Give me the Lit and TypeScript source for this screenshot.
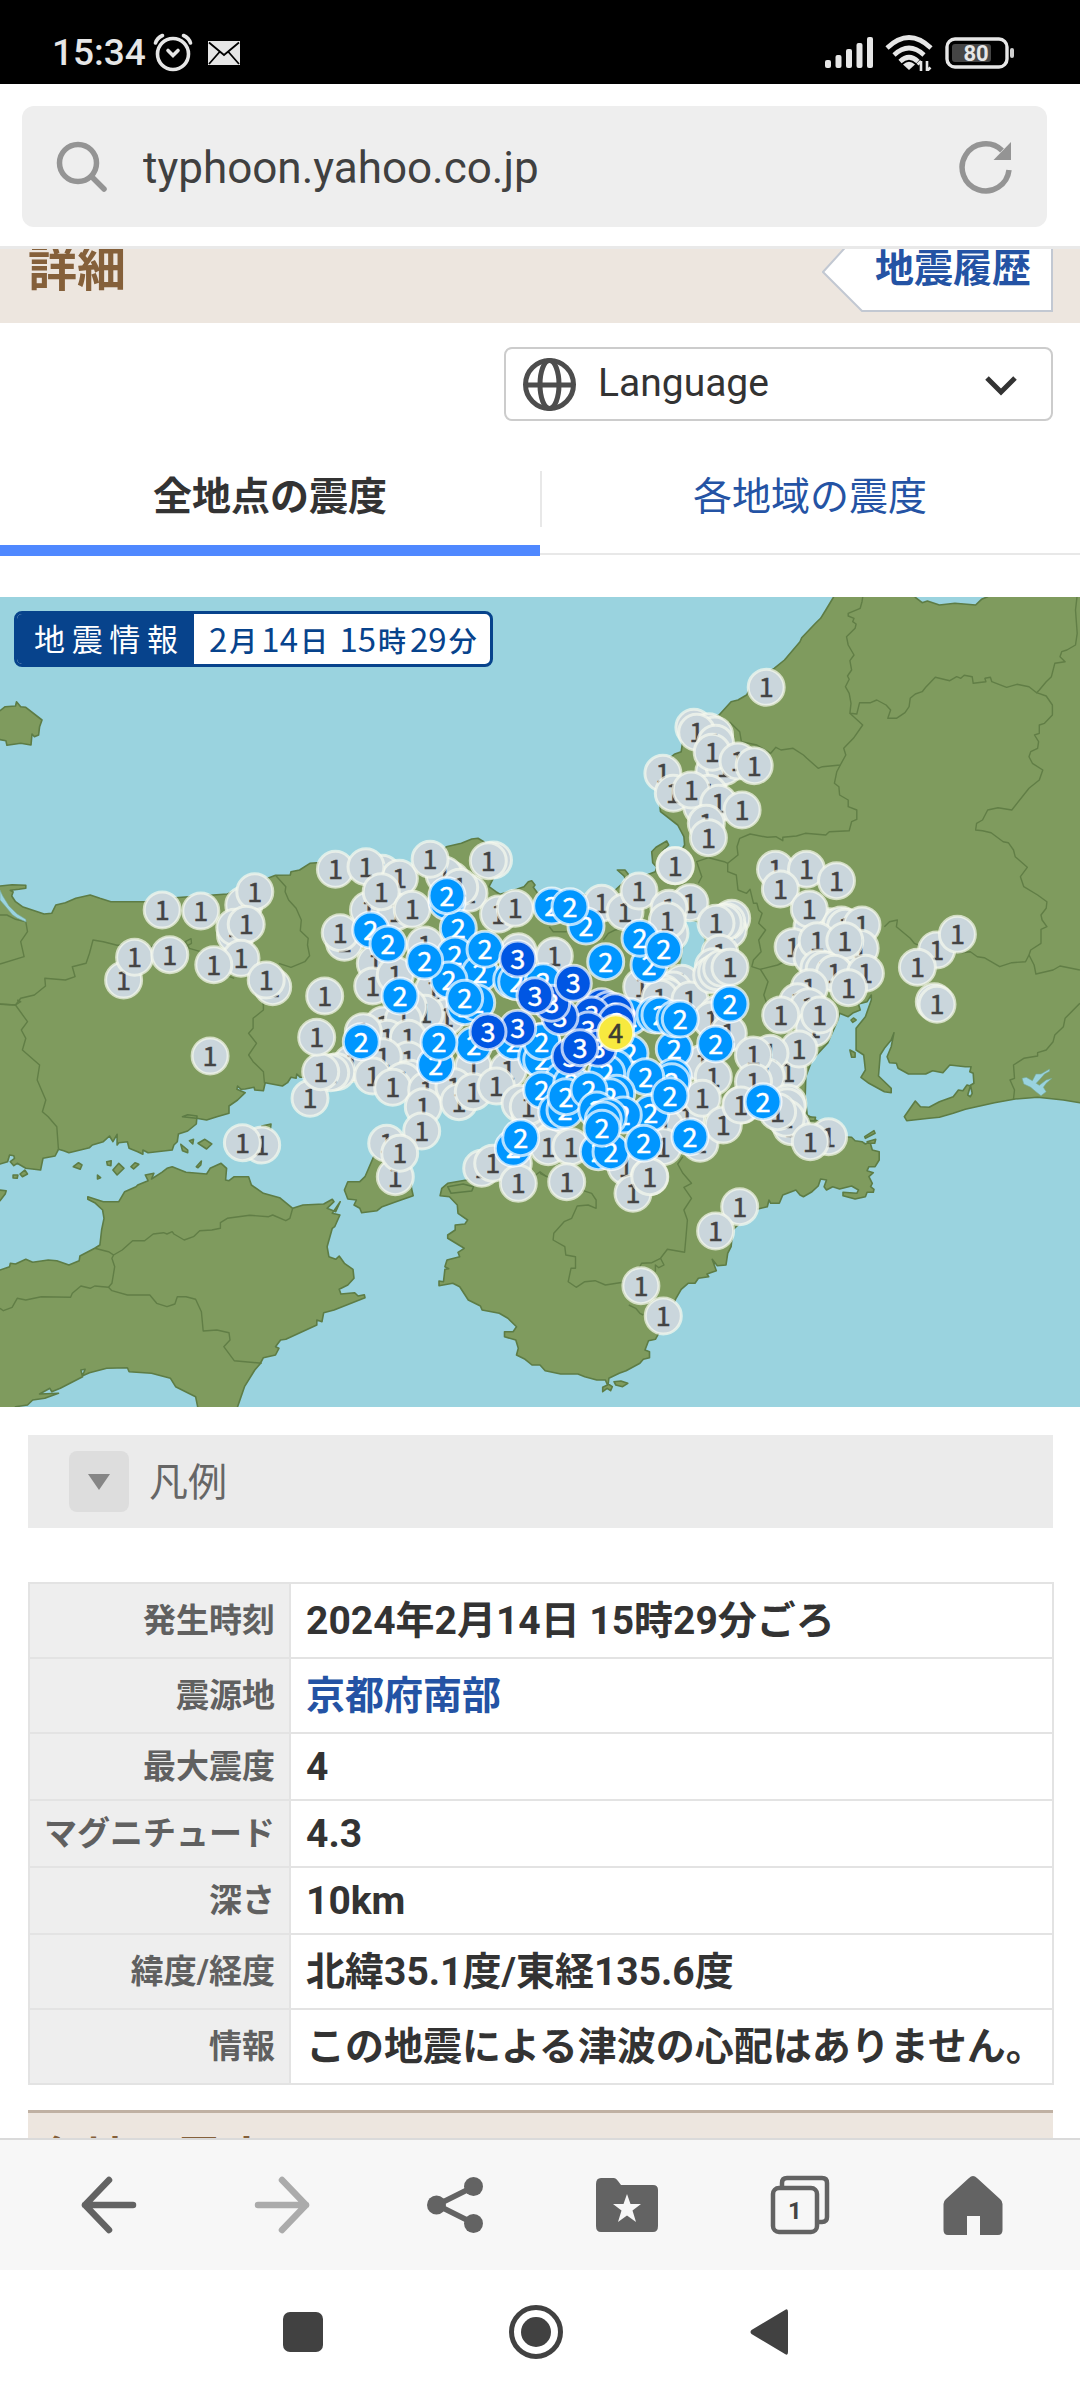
import { LitElement, html, svg, css } from "lit";
import { customElement, property } from "lit/decorators.js";

/* ---------- map geometry ---------- */

type Sheet = { x: number; y: number; sx: number; sy: number };
const NW: Sheet = { x: 0, y: -7, sx: 2.904, sy: 3 };
const NE: Sheet = { x: 540, y: -7, sx: 2.904, sy: 3 };
const SW: Sheet = { x: 0, y: 403, sx: 2.904, sy: 3 };
const SE: Sheet = { x: 540, y: 403, sx: 2.904, sy: 3 };
const KW: Sheet = { x: 300, y: 233, sx: 3, sy: 3 };
const KE: Sheet = { x: 500, y: 233, sx: 3, sy: 3 };

type Point = [number, number];

const pts = (s: Sheet, data: string): Point[] =>
  data
    .trim()
    .split(/\s+/)
    .map((p) => {
      const [x, y] = p.split(",").map(Number);
      return [Math.round((s.x + x / s.sx) * 10) / 10, Math.round((s.y + y / s.sy) * 10) / 10];
    });

const line = (points: Point[]) => "M" + points.map((p) => p.join(" ")).join("L");

const honshu = line([
  ...pts(NW, `-20,888 0,888 35,884 75,886 75,895 55,898 30,901 38,906 34,918 45,935 65,950 100,962 128,972 150,970 162,945 190,938 220,925 262,915 290,925 322,935 420,935 490,925 548,920 660,912 740,880 800,856 843,855 845,845 870,840 900,820 920,818 1000,815 1100,812 1200,830 1260,820 1296,770 1340,760 1370,747 1388,745 1405,755 1440,800 1440,850 1420,890 1440,905`),
  ...pts(KW, `600,193 650,178 672,170 685,155 695,152 705,165 700,172 712,188`),
  ...pts(KE, `150,205 250,195 330,195 378,150 372,138 352,120 375,120 385,133 382,145 400,150 466,125 470,112 458,98 455,65 468,52 500,33 506,45 490,60 480,80 500,92 540,85`),
  ...pts(NE, `400,800 420,765 418,740 400,705 350,665 345,620 335,560 370,510 390,493 410,485 415,450 470,400 520,375 555,335 575,330 600,315 620,275 680,235 710,210 755,155 760,143 800,100 815,85 830,60 852,22 856,-10 1080,-10 1090,22 1110,38 1125,33 1160,45 1205,40 1265,45 1282,28 1300,20 1310,-10 1610,-10`),
  ...pts(SE, `1610,315 1568,308 1520,300 1445,292 1380,297 1320,308 1235,328 1200,340 1160,352 1130,355 1065,362 1058,350 1075,325 1090,303 1105,320 1130,322 1160,305 1200,290 1215,270 1228,272 1240,255 1250,258 1242,285 1250,290 1255,280 1250,256 1260,250 1258,220 1248,215 1252,200 1235,200 1190,195 1170,218 1140,212 1120,222 1070,222 1040,205 1035,190 1015,188 1008,170 1020,140 1028,98 1020,120 1000,145 988,165 983,228 1020,265 1020,278 1000,275 955,250 932,232 945,210 940,165 918,150 918,85 945,50 962,0 962,-15 950,5 925,12 930,30 910,38 895,50 870,40 865,60 835,130 790,180 772,230 770,290 776,345 800,360 840,380 880,410 905,412 915,422 935,425 945,432 958,425 965,450 985,455 985,480 973,500 955,500 950,512 968,518 955,530 965,550 960,560 970,568 968,577 950,577 945,590 915,597 880,587 880,577 920,580 925,570 905,558 870,567 850,560 832,570 825,560 832,540 815,537 808,558 790,575 765,590 755,585 743,570 705,585 695,610 670,610 665,600 660,620 630,628 600,650 560,690 555,740 545,760 540,795 515,797 500,778 512,812 485,822 490,830 460,835 450,850 430,850 410,868 395,895 380,930 350,990 335,1018 315,1022 305,1050 318,1055 318,1073 300,1078 290,1090 250,1112 230,1120 200,1135 198,1152 210,1160 205,1172 195,1165 182,1175 182,1162 196,1155 190,1140 165,1140 130,1130 110,1122 60,1122 15,1112 0,1095`),
  ...pts(SW, `1545,1095 1525,1078 1500,1065 1505,1045 1498,1020 1465,1010 1465,995 1490,995 1500,980 1475,955 1450,940 1400,930 1395,918 1360,900 1335,860 1315,850 1275,857 1275,843 1288,845 1292,808 1303,806 1292,800 1298,780 1335,770 1330,757 1348,745 1300,715 1300,705 1322,690 1322,675 1350,672 1358,660 1330,640 1328,615 1305,590 1278,587 1283,565 1300,550 1355,540 1390,530 1400,480 1460,430 1520,350 1480,300 1400,290 1330,310 1250,290 1150,270 1090,250 1000,240 930,230 872,232 862,222 860,235 845,232 835,248 820,258 770,248 765,272 740,270 738,262 712,267 700,268 690,258 688,268 712,278 690,300 665,318 665,340 630,350 600,360 570,355 530,350 545,344 572,348 570,372 545,393 518,402 515,425 505,435 500,450 430,458 415,450 415,463 400,455 375,445 370,425 345,428 340,435 340,403 328,425 318,408 300,425 268,435 260,443 200,458 185,452 170,448 160,468 125,475 118,510 75,505 50,490 40,497 30,485 42,475 40,467 28,465 22,485 0,492 -20,495`),
]) + "Z";

const shikoku = line(
  pts(SW, `-20,812 0,810 28,800 30,790 45,792 75,778 95,787 140,780 165,782 200,795 230,782 232,768 275,745 290,735 295,690 302,655 298,630 275,608 255,598 255,590 300,605 345,605 362,575 395,560 400,555 430,542 422,525 447,520 440,537 470,517 485,505 500,500 540,517 600,522 610,505 642,490 658,505 655,540 665,542 680,530 722,530 730,555 765,580 812,593 850,625 880,615 940,612 965,598 970,605 950,625 975,635 988,605 965,640 987,645 972,680 965,685 950,740 955,770 975,778 985,768 1000,790 1025,808 1028,835 1010,855 985,868 990,882 1030,878 1040,888 1058,884 1060,893 970,930 940,938 935,965 920,960 920,975 830,1018 815,1020 800,1040 810,1045 800,1065 765,1073 755,1092 740,1110 710,1160 690,1220 690,1250 580,1250 568,1190 510,1160 495,1135 440,1120 375,1115 370,1103 310,1105 260,1118 240,1127 247,1108 235,1110 240,1130 175,1165 150,1175 145,1165 115,1182 170,1180 130,1195 95,1200 80,1215 45,1220 40,1250 -20,1250`),
) + "Z";

const area = (s: Sheet, d: string) => line(pts(s, d)) + "Z";

const islands = [
  area(SW, `1085,470 1060,530 1045,545 1010,545 1000,570 1010,597 1035,600 1028,615 1045,625 1050,638 1095,632 1110,620 1150,605 1200,587 1195,565 1190,480 1150,440`),
  area(NW, `-20,365 0,362 15,350 45,348 48,335 60,350 75,352 122,390 115,410 112,435 100,440 93,432 90,465 60,460 20,466 17,452 -20,445`),
  area(SW, `213,500 228,488 238,495 233,508`),
  area(SW, `310,485 323,482 322,497 312,495`),
  area(SW, `328,510 345,490 360,505 340,525`),
  area(SW, `380,500 392,488 403,493 388,507`),
  area(SW, `283,525 292,533 283,537`),
  area(SW, `525,433 545,450 545,458 530,452`),
  area(SW, `550,422 562,418 560,432`),
  area(SW, `575,430 595,418 615,432 600,447`),
  area(SW, `570,500 585,483 583,495 575,503`),
  area(SW, `760,378 787,372 785,392`),
  area(SW, `58,522 72,510 80,522 65,530`),
  area(SW, `38,525 52,525 50,535 38,534`),
  area(SW, `-5,570 18,572 15,582 0,602 -5,602`),
  area(SW, `1300,560 1345,552 1375,560 1370,573 1310,580`),
  area(SE, `900,150 915,158 915,172 905,172`),
  area(SE, `943,410 970,392 973,400 945,415`),
  area(SE, `950,425 975,418 972,430 955,430`),
  area(SE, `215,1145 235,1143 255,1150 240,1160 220,1155`),
  area(SE, `775,350 800,352 798,362 785,362`),
  area(SE, `903,60 910,54 918,60 908,67`),
];

const lakes = [
  area(KE, `545,268 590,275 615,330 603,370 605,400 595,420 540,424 500,470 460,520 450,510 490,450 540,410 550,350 560,310`),
  area(SE, `1400,235 1412,232 1430,242 1440,222 1455,222 1480,207 1480,214 1465,222 1450,240 1441,250 1450,256 1470,240 1487,235 1470,250 1462,262 1470,275 1455,287 1440,275 1425,262 1405,252`),
  area(NW, `0,900 8,918 26,948 50,972 75,988 76,996 50,984 36,974 15,948 0,930`),
];

const borders = [
  line(pts(NE, `938,15 935,35 930,55 895,70 895,78 912,85 908,95 918,102 915,115 890,140 895,165 912,195 900,212 905,240 893,258 898,268 887,290 898,310 903,340 900,370 920,372 928,338 960,338 978,330 1005,345 1018,360 1010,385 1035,385 1060,368 1072,350 1075,325 1090,312 1110,305 1120,292 1148,262 1190,272 1210,260 1222,265 1232,256 1255,260 1258,280 1295,275 1292,265 1308,262 1312,275 1355,292 1385,283 1420,290 1442,308 1450,300 1470,275 1485,260 1495,220 1525,215 1510,200 1515,185 1530,180 1555,165 1560,130 1555,60 1560,15`)),
  line(pts(NE, `900,370 937,405 910,445 882,475 888,495 872,525 820,530 808,535 775,505 765,495 735,475 700,480 685,472 670,490 630,465 585,455 580,425 550,395`)),
  line(pts(NE, `872,525 862,545 855,580 868,590 870,615 895,630 895,650 920,660 920,688 905,695 898,722 840,725 830,735 770,730 745,738 705,742 705,752 685,740 660,742 610,732 580,745 572,770 575,795 545,820 535,815 490,803 455,815 470,860 460,880`)),
  line(pts(NE, `1442,308 1470,318 1488,345 1488,375 1465,400 1450,405 1450,430 1436,435 1448,455 1445,475 1425,485 1420,500 1430,520 1460,540 1450,570 1420,595 1370,660 1330,653 1300,660 1285,690 1268,700 1265,720 1285,722 1310,728 1345,755 1360,758 1375,780 1380,800 1415,832 1395,860 1405,890 1445,915 1472,935 1470,955 1455,975 1458,990 1472,1010 1455,1018 1455,1060 1425,1080 1420,1095 1435,1125 1440,1152 1490,1140 1510,1128 1568,1140`)),
  line(pts(NE, `545,820 545,845 570,855 575,900 600,910 610,898 620,940 630,940 635,960 645,970 635,1000 655,1020 635,1050 642,1085 620,1110 615,1130 640,1138 690,1125 720,1110`)),
  line(pts(NE, `1000,1010 1015,995 1038,990 1035,1010 1075,1045 1087,1060 1130,1080 1210,1090 1250,1085 1270,1100 1290,1103 1335,1130 1370,1118 1410,1115 1420,1095`)),
  line(pts(NE, `640,1138 662,1175 650,1215 660,1245`)),
  line(pts(SE, `1568,10 1525,55 1520,80 1495,105 1490,125 1470,150 1445,158 1445,168 1405,175 1375,195 1378,235 1365,240 1378,270 1375,297`)),
  line(pts(SE, `415,470 400,492 415,520 440,550 418,562 440,595 418,630 428,660 425,700 420,757 370,748 350,775 325,788 295,790 285,810 250,845 190,855 160,842 130,845 105,862 82,845 90,805 103,805 103,770 75,765 72,740 38,720 40,700 70,665 92,655 108,618 140,615 163,625 163,600 150,580 60,550 20,530 0,520`)),
  line(pts(SE, `350,775 360,795 345,803 335,795 335,815`)),
  line(pts(SE, `258,915 278,925 290,940 300,945`)),
  line(pts(NW, `800,856 830,890 828,905 838,930 860,955 875,990 872,1022 895,1045 893,1065 899,1097 885,1115 845,1132 810,1120`)),
  line(pts(NW, `680,1165 640,1150 600,1090 550,1075 538,1055 555,1046 556,1060 530,1075 480,1060 420,1075 370,1065 340,1066 300,1055 270,1050 260,1090 250,1120 210,1130 218,1160 190,1170 130,1165 132,1188 100,1215 60,1225 45,1245 0,1243`)),
  line(pts(NW, `0,975 20,975 45,988 75,995 80,1025 60,1055 70,1100 0,1122`)),
  line(pts(NW, `765,1245 762,1235 775,1225`)),
  line(pts(SW, `0,12 45,15 80,65 62,90 75,115 65,150 115,195 108,240 133,300 123,335 140,350 165,380 170,450`)),
  line(pts(SW, `765,10 765,30 735,55 735,85 722,100 745,130 722,165 735,185 765,215 768,250`)),
  line(pts(SW, `850,625 842,655 830,662 792,645 780,650 725,646 660,655 640,668 640,685 615,690 580,692 562,710 535,720 505,702 500,695 485,702 475,698 445,702 420,722 385,722 355,750 330,765 315,755 275,745`)),
  line(pts(SW, `330,765 325,775 333,800 325,850 315,862 275,858 262,865 235,858 210,880 205,892 120,890 75,900 50,895 35,922 10,932 0,925`)),
  line(pts(SW, `315,862 325,872 370,885 435,885 455,910 485,920 508,912 515,890 540,890 568,898 585,935 590,993 630,990 665,998 668,1020 650,1040 680,1082 760,1090`)),
  line(pts(SW, `50,0 60,5 45,15`)),
  line(pts(KE, `148,290 160,305 200,305`)),
  line(pts(KE, `380,295 345,300 325,310 310,330`)),
  line(pts(KE, `20,1035 100,1040 120,1025 140,1040`)),
];

/* ---------- observation points: drawn in list order, later ones on top ---------- */

type Mark = { level: number; x: number; y: number };
const marks = (level: number, s: Sheet, data: string): Mark[] =>
  pts(s, data).map(([x, y]) => ({ level, x, y }));

const stations: Mark[] = [
  ...marks(1, NW, `359,1170 391,1102 471,960 493,1094 708,945 740,905 583,963 684,1035 682,1012 715,1003 700,1105 621,1124 792,1190 773,1170 943,1218 1110,850 974,838 1160,865 1063,830 1070,960 1150,965 1107,905 1197,958 1000,1057 988,1028 1310,870 1290,855 1249,808 1362,910 1335,892 1433,810 1418,812 1448,972 1496,955 1090,1120`),
  ...marks(1, KW, `218,468 375,345 286,435 450,490 410,460 400,480 440,560 375,550 325,530 250,585 310,570 262,625 190,605 325,625 325,690 250,680 155,700 110,725 92,728 30,805 62,725 50,622 218,738 330,745 310,752 278,772 380,780 370,830 520,710 462,770 477,815 520,785 625,720 589,768 365,903 260,940 286,1040 299,970 660,820 690,850 760,930 640,1000 545,1015 578,1000 655,1060 655,365`),
  ...marks(1, KE, `163,378 305,220 375,245 417,183 525,107 570,218 507,235 510,310 502,272 695,265 685,300 680,275 670,278 648,280 425,470 545,460 520,480 490,490 500,500 480,505 570,510 660,370 640,410 635,435 650,425 665,415 690,412 655,550 635,570 685,610 607,700 640,740 560,860 607,805 725,825 495,890 600,940 670,885 490,950 378,1010 448,1040 85,830 160,935 145,950 213,950 200,1055`),
  ...marks(1, NE, `657,292 447,412 490,425 507,435 455,427 510,460 505,545 535,530 500,487 575,513 622,527 357,550 387,610 490,610 470,650 439,600 519,640 587,660 483,700 489,743 393,827 684,838 774,838 698,897 861,872 790,1010 840,1010 782,957 875,1005 887,1012 935,1005 735,1070 930,1075 790,1100 805,1052 885,1052 810,1135 825,1140 855,1150 945,1150 782,1193 896,1193 748,1235 1152,1080 1212,1033 1096,1132 1145,1235`),
  ...marks(1, SE, `1153,13 780,20 795,85 699,45 812,45 720,215 752,147 668,160 657,230 620,165 620,245 720,310 718,320 730,380 715,355 690,335 583,315 838,410 785,425 580,620 510,693 293,857 358,948 270,580 319,530`),
  ...marks(1, SW, `610,168 760,435 704,428`),
  ...marks(2, KW, `441,215 475,295 441,197 212,300 264,342 465,375 540,430 555,358 495,530 530,518 447,450 494,505 374,393 300,498 184,635 521,645 407,705 417,637 640,635 725,635 635,450 650,455`),
  ...marks(2, KE, `155,228 258,288 210,230 447,405 420,325 491,358 317,395 130,455 110,680 125,690 125,635 390,560 465,555 480,555 523,657 525,567 541,567 690,522 647,642 390,670 345,715 320,730 190,750 125,780 215,760 170,845 195,840 198,800 520,740 515,755 437,740 350,790 330,800 267,780 452,850 510,797 290,840 370,855 325,860 310,870 295,965 333,965 306,895 431,940 570,920 40,955 62,923`),
  ...marks(2, SE, `648,305`),
  ...marks(3, KE, `305,530 325,540 345,545 275,555 350,575 265,600 180,560 155,520 105,497 220,460 53,387 53,595 295,655 210,680 240,653`),
  ...marks(3, KW, `564,605`),
  ...marks(4, KE, `347,608`),
];

@customElement("quake-map")
export class QuakeMap extends LitElement {
  static styles = css`
    :host { display: block; position: relative; font-family: "Noto Sans CJK JP", sans-serif; }
    .chart { display: block; width: 100%; height: auto; }
    .land { fill: #7f9b5e; stroke: #5d7c45; stroke-width: 1.6; stroke-linejoin: round; }
    .lake { fill: #9ad3df; stroke: #76a795; stroke-width: 0.6; }
    .border { fill: none; stroke: #617e46; stroke-width: 1.4; stroke-linejoin: round; }
    .dot { stroke: #fff; stroke-opacity: 0.7; stroke-width: 3; }
    .l1 .dot { stroke: #f6f9ee; }
    .digit { font-size: 27px; text-anchor: middle; fill: #fff; stroke: #fff; stroke-width: 0.5; }
    .l1 .dot { fill: #cad6dc; }
    .l1 .digit { fill: #444; stroke: #444; }
    .l2 .dot { fill: #0096ff; }
    .l3 .dot { fill: #0056e3; }
    .l4 .dot { fill: #f7e93f; }
    .l4 .digit { fill: #3d3d33; stroke: #3d3d33; }
    .badge {
      position: absolute; top: 14px; left: 14px; display: flex; box-sizing: border-box;
      height: 56px; border: 3px solid #07438c; border-radius: 8px; overflow: hidden;
      background: #fff; line-height: 48px; white-space: nowrap;
    }
    .kind {
      width: 144px; padding: 0 16px 2px 17px; background: #07438c; color: #fff;
      font-size: 31px; text-align-last: justify;
    }
    .when { padding: 0 13px 0 15px; color: #07438c; font-size: 33px; }
    .unit { font-size: 28px; font-weight: 500; margin: 0 4px 0 2px; }
    .unit.last { margin-right: 0; }
  `;

  render() {
    return html`
      <svg class="chart" viewBox="0 0 1080 810" role="img" aria-label="震度分布図">
        <rect width="1080" height="810" fill="#9ad3df"></rect>
        <path class="land" d=${honshu}></path>
        <path class="land" d=${shikoku}></path>
        ${islands.map((d) => svg`<path class="land" d=${d}></path>`)}
        ${borders.map((d) => svg`<path class="border" d=${d}></path>`)}
        ${lakes.map((d) => svg`<path class="lake" d=${d}></path>`)}
        ${stations.map(
          (m) => svg`<g class="l${m.level}">
            <circle class="dot" cx=${m.x} cy=${m.y} r="18"></circle>
            <text class="digit" x=${m.x} y=${m.y + 10}>${m.level}</text>
          </g>`,
        )}
      </svg>
      <div class="badge">
        <span class="kind">地震情報</span>
        <span class="when">2<span class="unit">月</span>14<span class="unit">日</span> 15<span class="unit">時</span>29<span class="unit last">分</span></span>
      </div>
    `;
  }
}

@customElement("status-bar")
export class StatusBar extends LitElement {
  @property() time = "15:34";

  static styles = css`
    :host {
      display: flex; align-items: center; height: 84px; padding: 22px 65px 0 52px; box-sizing: border-box;
      background: #000; color: #e6e6e6; font-family: Roboto, sans-serif;
    }
    .time { font-size: 37px; line-height: 62px; font-weight: 500; }
    .group { display: flex; align-items: center; gap: 12px; margin-left: auto; }
    svg { display: block; }
    .alarm { margin: 0 14px 0 6px; }
    .pct { font: bold 22px Roboto, sans-serif; fill: #e6e6e6; text-anchor: middle; }
  `;

  render() {
    return html`
      <span class="time">${this.time}</span>
      <svg class="alarm" width="42" height="42" viewBox="0 0 42 42" fill="none" stroke="#e6e6e6" stroke-linecap="round">
        <circle cx="21" cy="22" r="15.5" stroke-width="3.6"></circle>
        <path d="M3.500 11Q5 6 10.500 3.500M38.500 11Q37 6 31.500 3.500" stroke-width="3.6"></path>
        <path d="M16 18.500L21 23.500L26 18.500" stroke-width="3.600"></path>
      </svg>
      <svg width="32" height="24" viewBox="0 0 32 24">
        <rect width="32" height="24" fill="#e6e6e6"></rect>
        <path d="M1 1.500L16 14L31 1.500M1 23L11.500 11M31 23L20.500 11" fill="none" stroke="#000" stroke-width="1.8"></path>
      </svg>
      <div class="group">
        <svg width="48" height="32" viewBox="0 0 48 32" fill="#e6e6e6">
          <rect x="0" y="23" width="6" height="8" rx="2"></rect>
          <rect x="10.500" y="18" width="6" height="13" rx="2"></rect>
          <rect x="21" y="12" width="6" height="19" rx="2"></rect>
          <rect x="31.500" y="6" width="6" height="25" rx="2"></rect>
          <rect x="42" y="0" width="6" height="31" rx="2"></rect>
        </svg>
        <svg width="48" height="36" viewBox="0 0 48 36" fill="none" stroke="#e6e6e6" stroke-width="4.600">
          <path d="M2 13Q24 -8 46 13M9 20Q24 6 39 20M15 26.500Q24 18 33 26.500"></path>
          <path d="M18 29.500Q24 24 30 29.500L24 35Z" fill="#e6e6e6" stroke="none"></path>
          <path d="M36 36V26M32.500 29.500L36 26M42 26V36M45.500 32.500L42 36" stroke-width="2.600"></path>
        </svg>
        <svg width="70" height="32" viewBox="0 0 70 32">
          <rect x="2" y="2" width="60" height="28" rx="8" fill="none" stroke="#e6e6e6" stroke-width="3.400"></rect>
          <rect x="7" y="7" width="39" height="18" rx="3" fill="#454545"></rect>
          <rect x="65" y="11" width="4" height="10" rx="2" fill="#cfcfcf"></rect>
          <text class="pct" x="31" y="24">80</text>
        </svg>
      </div>
    `;
  }
}

interface Fact { label: string; value: string; href?: string; compact?: boolean }

const facts: Fact[] = [
  { label: "発生時刻", value: "2024年2月14日 15時29分ごろ" },
  { label: "震源地", value: "京都府南部", href: "#epicenter" },
  { label: "最大震度", value: "4", compact: true },
  { label: "マグニチュード", value: "4.3", compact: true },
  { label: "深さ", value: "10km", compact: true },
  { label: "緯度/経度", value: "北緯35.1度/東経135.6度" },
  { label: "情報", value: "この地震による津波の心配はありません。" },
];

@customElement("app-root")
export class AppRoot extends LitElement {
  static styles = css`
    :host {
      display: flex; flex-direction: column; height: 100vh; overflow: hidden; background: #fff; color: #333;
      font-family: Roboto, "Noto Sans CJK JP", sans-serif; font-size: 39px;
    }
    a { color: #2453a4; text-decoration: none; }
    button { border: 0; padding: 0; background: none; font: inherit; color: inherit; }
    svg { display: block; }

    .toolbar { padding: 22px 33px 19px 22px; border-bottom: 3px solid #e9e9e9; }
    .address {
      display: flex; align-items: center; height: 121px; padding: 0 34px 0 34px; box-sizing: border-box;
      border-radius: 12px; background: #eee;
    }
    .url {
      flex: 1; min-width: 0; margin: 3px 0 0 35px; padding: 0; border: 0; outline: 0; background: none;
      font: 44px/60px Roboto, sans-serif; color: #404040;
    }

    .page { flex: 1; min-height: 0; overflow: hidden; display: flex; flex-direction: column; }
    .page > * { flex: none; }
    .heading {
      display: flex; align-items: flex-end; justify-content: space-between; height: 74px; overflow: hidden;
      padding: 0 27px 0 28px; box-sizing: border-box; background: #ede6df;
    }
    .title { margin: 0 0 29px; font-size: 49px; line-height: 48px; color: #85603a; }
    .history {
      position: relative; display: flex; align-items: center; justify-content: flex-end; width: 231px; height: 84px;
      margin-bottom: 11px; padding: 0 22px 2px 0; box-sizing: border-box; font-weight: bold; line-height: 40px;
    }
    .flag { position: absolute; inset: 0; }
    .history .word { position: relative; }

    .language { display: flex; justify-content: flex-end; padding: 24px 27px 0; }
    .picker {
      display: flex; align-items: center; width: 54%; max-width: 549px; height: 74px; box-sizing: border-box;
      padding-left: 17px; border: 2px solid #ccc; border-radius: 8px; position: relative;
    }
    .picker select {
      flex: 1; min-width: 0; height: 70px; margin-left: 22px; padding: 0 0 2px; border: 0; outline: 0; appearance: none;
      background: none; font: 39px Roboto, sans-serif; color: #333;
    }
    .chevron { margin: 4px 34px 0 0; pointer-events: none; }

    .tabs { display: grid; grid-template-columns: 1fr 1fr; margin-top: 21px; }
    .tab {
      position: relative; display: flex; align-items: center; justify-content: center; height: 114px;
      padding-bottom: 13px; box-sizing: border-box; box-shadow: inset 0 -1px #fff, inset 0 -3px #e8e8e8; color: #2453a4;
    }
    .tab.on { color: #333; font-weight: bold; box-shadow: inset 0 -11px #4f88ff; }
    .tab.on::after { content: ""; position: absolute; right: -2px; top: 29px; height: 56px; width: 2px; background: #e8e8e8; }
    .map { margin-top: 41px; }

    .legend {
      display: flex; align-items: center; gap: 20px; height: 93px; margin: 28px 27px 0 28px; padding: 0 41px;
      background: #ebebeb; color: #666; text-align: left;
    }
    .caption { padding-bottom: 6px; }
    .toggle { display: grid; place-items: center; width: 60px; height: 61px; border-radius: 8px; background: #ddd; }

    .frame { display: grid; margin: 54px 26px 0 28px; }
    .facts { border-collapse: collapse; line-height: 48px; font-weight: bold; }
    .facts th, .facts td { height: 73px; padding: 0; border: 2px solid #e3e3e3; }
    .facts .compact th, .facts .compact td { height: 65px; }
    .facts th { width: 245px; padding-right: 14px; text-align: right; font-size: 33px; color: #606060; background: #eee; }
    .facts td { padding-left: 15px; }

    .next { margin: 25px 27px 0 28px; padding: 21px 10px; border-top: 3px solid #c0b1a3; background: #ede6df; }
    .next h2 { margin: 0; font-size: 46px; line-height: 50px; color: #85603a; }

    .controls {
      display: grid; grid-template-columns: repeat(6, 1fr); height: 132px; padding: 0 21px 0 23px; box-sizing: border-box;
      border-top: 2px solid #dadada; background: #f7f7f7; color: #636363;
    }
    .controls button { display: grid; place-items: center; }
    .controls .dim { color: #ababab; }
    .count { font: bold 24px Roboto, sans-serif; fill: #444; text-anchor: middle; }

    .system { display: flex; justify-content: center; gap: 173px; height: 130px; padding: 0 8px 6px 0; box-sizing: border-box; color: #414141; }
    .system button { display: grid; place-items: center; width: 60px; }
  `;

  render() {
    return html`
      <status-bar></status-bar>
      <header class="toolbar">
        <div class="address">
          <svg width="52" height="52" viewBox="0 0 52 52" fill="none" stroke="#949494" stroke-width="5.500" stroke-linecap="round">
            <circle cx="22" cy="22" r="18.500"></circle>
            <path d="M35.500 35.500L48 48"></path>
          </svg>
          <input class="url" type="text" aria-label="アドレス" value="typhoon.yahoo.co.jp" />
          <button aria-label="再読み込み">
            <svg width="54" height="54" viewBox="0 0 54 54" fill="none" stroke="#949494" stroke-width="5.500">
              <path d="M50 30A23.500 23.500 0 1 1 43 10.500"></path>
              <path d="M52 2V20H34.500Z" fill="#949494" stroke="none"></path>
            </svg>
          </button>
        </div>
      </header>

      <main class="page">
        <div class="heading">
          <h1 class="title">詳細</h1>
          <a class="history" href="#history">
            <svg class="flag" width="231" height="84" viewBox="0 0 231 84">
              <path d="M40 1H230V83H40L1 44Z" fill="#fff" stroke="#c2c8d2" stroke-width="2"></path>
            </svg>
            <span class="word">地震履歴</span>
          </a>
        </div>

        <div class="language">
          <label class="picker">
            <svg width="53" height="53" viewBox="0 0 53 53" fill="none" stroke="#4d4d4d" stroke-width="5">
              <circle cx="26.500" cy="26.500" r="24"></circle>
              <ellipse cx="26.500" cy="26.500" rx="9.500" ry="24"></ellipse>
              <path d="M2 27H51"></path>
            </svg>
            <select aria-label="Language"><option>Language</option></select>
            <svg class="chevron" width="32" height="22" viewBox="0 0 32 22" fill="none" stroke="#333" stroke-width="5">
              <path d="M2 3L16 17L30 3"></path>
            </svg>
          </label>
        </div>

        <nav class="tabs">
          <a class="tab on" href="#points">全地点の震度</a>
          <a class="tab" href="#areas">各地域の震度</a>
        </nav>

        <quake-map class="map"></quake-map>

        <button class="legend" aria-expanded="false">
          <span class="toggle">
            <svg width="22" height="16" viewBox="0 0 22 16" fill="#868686"><path d="M0 0H22L11 16Z"></path></svg>
          </span>
          <span class="caption">凡例</span>
        </button>

        <div class="frame">
          <table class="facts">
            <tbody>
              ${facts.map(
                (f) => html`<tr class=${f.compact ? "compact" : ""}>
                  <th scope="row">${f.label}</th>
                  <td>${f.href ? html`<a href=${f.href}>${f.value}</a>` : f.value}</td>
                </tr>`,
              )}
            </tbody>
          </table>
        </div>

        <section class="next"><h2>各地の震度</h2></section>
      </main>

      <nav class="controls">
        <button aria-label="戻る">
          <svg width="56" height="58" viewBox="0 0 56 58" fill="none" stroke="currentColor" stroke-width="6.500" stroke-linecap="round" stroke-linejoin="round">
            <path d="M28 4L4 29L28 54M4 29H52"></path>
          </svg>
        </button>
        <button class="dim" aria-label="進む">
          <svg width="56" height="58" viewBox="0 0 56 58" fill="none" stroke="currentColor" stroke-width="6.500" stroke-linecap="round" stroke-linejoin="round">
            <path d="M28 4L52 29L28 54M52 29H4"></path>
          </svg>
        </button>
        <button aria-label="共有">
          <svg width="56" height="56" viewBox="0 0 56 56" fill="currentColor">
            <path d="M10 28L46 10M10 28L46 46" stroke="currentColor" stroke-width="5.500"></path>
            <circle cx="9.500" cy="28" r="9.500"></circle>
            <circle cx="46.500" cy="9.500" r="9.500"></circle>
            <circle cx="46.500" cy="46.500" r="9.500"></circle>
          </svg>
        </button>
        <button aria-label="ブックマーク">
          <svg width="62" height="54" viewBox="0 0 62 54" fill="currentColor">
            <path d="M5 0H18Q20 0 22 3L25 7H57Q62 7 62 12V48Q62 54 57 54H5Q0 54 0 48V6Q0 0 5 0Z"></path>
            <path d="M31 16L34.500 26H45L36.500 32.500L40 44L31 37.500L22 44L25.500 32.500L17 26H27.500Z" fill="#f7f7f7"></path>
          </svg>
        </button>
        <button aria-label="タブ">
          <svg width="60" height="60" viewBox="0 0 60 60" fill="none" stroke="currentColor" stroke-width="4.500">
            <path d="M12 12V8Q12 3 17 3H52Q57 3 57 8V42Q57 47 52 47H48"></path>
            <rect x="3" y="13" width="44" height="44" rx="6"></rect>
            <text class="count" x="25" y="44" stroke="none">1</text>
          </svg>
        </button>
        <button aria-label="ホーム">
          <svg width="60" height="60" viewBox="0 0 60 60" fill="currentColor">
            <path d="M26 3Q30 -1 34 3L57 24Q59.500 26 59.500 29V55Q59.500 60 55 60H37V41H24V60H5Q0.500 60 0.500 55V29Q0.500 26 3 24Z"></path>
          </svg>
        </button>
      </nav>

      <nav class="system">
        <button aria-label="アプリ履歴">
          <svg width="40" height="40" viewBox="0 0 40 40" fill="currentColor"><rect width="40" height="40" rx="7"></rect></svg>
        </button>
        <button aria-label="ホーム画面">
          <svg width="54" height="54" viewBox="0 0 54 54">
            <circle cx="27" cy="27" r="24.500" fill="none" stroke="currentColor" stroke-width="5"></circle>
            <circle cx="27" cy="27" r="15" fill="currentColor"></circle>
          </svg>
        </button>
        <button aria-label="前の画面">
          <svg width="38" height="46" viewBox="0 0 38 46" fill="currentColor"><path d="M35 1Q38 -1 38 3V43Q38 47 35 45L1.500 25Q-0.500 23 1.500 21Z"></path></svg>
        </button>
      </nav>
    `;
  }
}
